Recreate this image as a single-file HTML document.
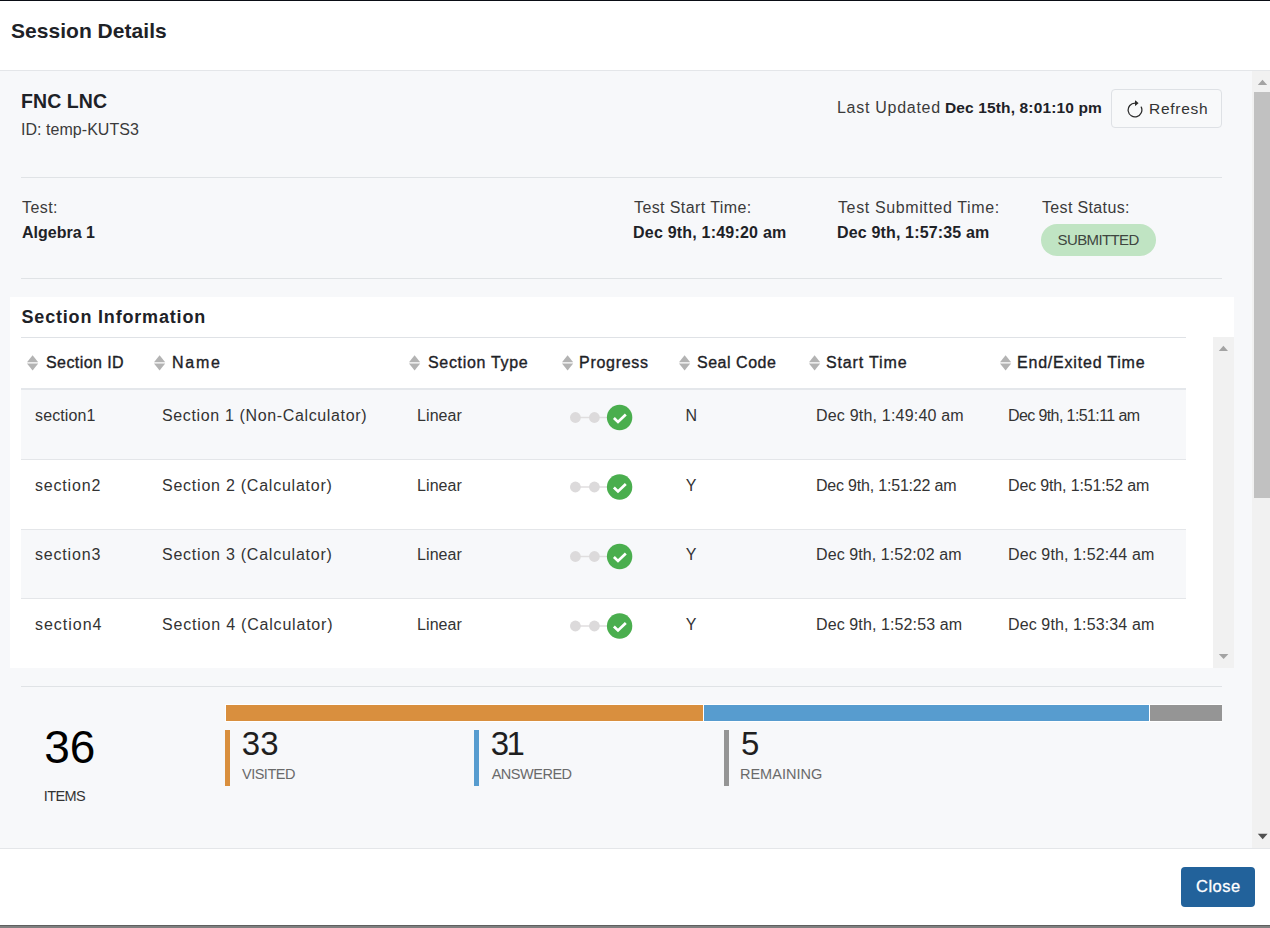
<!DOCTYPE html>
<html><head><meta charset="utf-8"><style>
html,body{margin:0;padding:0}
body{width:1270px;height:928px;overflow:hidden;position:relative;background:#fff;font-family:"Liberation Sans",sans-serif}
.abs{position:absolute}
.t{position:absolute;white-space:nowrap;line-height:normal}
</style></head><body>
<div class="abs" style="left:0;top:0;width:1270px;height:1px;background:#0a0d15"></div>
<div class="abs" style="left:0;top:70px;width:1270px;height:1px;background:#e4e6e9"></div>
<div class="abs" style="left:0;top:71px;width:1253px;height:777px;background:#f7f8fa"></div>
<!-- outer scrollbar -->
<div class="abs" style="left:1252px;top:71px;width:18px;height:777px;background:#f1f1f1"></div>
<div class="abs" style="left:1254px;top:92px;width:16px;height:406px;background:#c1c1c1"></div>
<svg class="abs" style="left:1253px;top:71px" width="17" height="17"><path d="M4.8 14 L9.5 8.8 L14.2 14 Z" fill="#a3a3a3"/></svg>
<svg class="abs" style="left:1253px;top:831px" width="17" height="17"><path d="M4.8 2.8 L9.7 8.3 L14.6 2.8 Z" fill="#505050"/></svg>
<div class="abs" style="left:0;top:848px;width:1270px;height:1px;background:#e4e6e9"></div>
<div class="abs" style="left:0;top:925px;width:1270px;height:1px;background:#5f5f5f"></div>
<div class="abs" style="left:0;top:926px;width:1270px;height:2px;background:#808080"></div>
<!-- refresh button -->
<div class="abs" style="left:1111px;top:89px;width:109px;height:37px;border:1px solid #dee1e5;border-radius:4px;background:#f8f9fa"></div>
<svg class="abs" style="left:1124.6px;top:99.5px" width="20" height="20" viewBox="0 0 16 16"><path fill="#2b2b2b" fill-rule="evenodd" d="M8 3a5 5 0 1 0 4.546 2.914.5.5 0 0 1 .908-.417A6 6 0 1 1 8 2z"/><path fill="#2b2b2b" d="M8 4.466V.534a.25.25 0 0 1 .41-.192l2.36 1.966c.12.1.12.284 0 .384L8.41 4.658A.25.25 0 0 1 8 4.466"/></svg>
<div class="abs" style="left:21px;top:177px;width:1201px;height:1px;background:#e0e3e6"></div>
<!-- badge -->
<div class="abs" style="left:1041px;top:224px;width:115px;height:32px;border-radius:16px;background:#c0e4c3"></div>
<div class="abs" style="left:21px;top:278px;width:1201px;height:1px;background:#e0e3e6"></div>
<!-- section panel -->
<div class="abs" style="left:10px;top:297px;width:1224px;height:371px;background:#fff"></div>
<div class="abs" style="left:21px;top:337px;width:1165px;height:1px;background:#dfe2e6"></div>
<div class="abs" style="left:21px;top:388px;width:1165px;height:2px;background:#e4e7eb"></div>
<div class="abs" style="left:21px;top:390px;width:1165px;height:69px;background:#f7f8fa"></div>
<div class="abs" style="left:21px;top:459px;width:1165px;height:1px;background:#e4e6e9"></div>
<div class="abs" style="left:21px;top:529px;width:1165px;height:1px;background:#e4e6e9"></div>
<div class="abs" style="left:21px;top:530px;width:1165px;height:68px;background:#f7f8fa"></div>
<div class="abs" style="left:21px;top:598px;width:1165px;height:1px;background:#e4e6e9"></div>
<!-- inner scrollbar -->
<div class="abs" style="left:1213px;top:337px;width:21px;height:331px;background:#f1f1f1"></div>
<svg class="abs" style="left:1213px;top:340px" width="21" height="14"><path d="M5.8 11 L10.4 5.8 L15 11 Z" fill="#a3a3a3"/></svg>
<svg class="abs" style="left:1213px;top:650px" width="21" height="14"><path d="M5.8 4 L10.6 8.9 L15.4 4 Z" fill="#a3a3a3"/></svg>
<div class="abs" style="left:27.3px;top:355px;width:12px;height:16px"><svg width="12" height="16" viewBox="0 0 12 16"><path d="M5.6 0.3 L11.2 7.3 L0 7.3 Z" fill="#b3b3b3"/><path d="M5.6 15.6 L11.2 8.6 L0 8.6 Z" fill="#b3b3b3"/></svg></div>
<div class="abs" style="left:154.2px;top:355px;width:12px;height:16px"><svg width="12" height="16" viewBox="0 0 12 16"><path d="M5.6 0.3 L11.2 7.3 L0 7.3 Z" fill="#b3b3b3"/><path d="M5.6 15.6 L11.2 8.6 L0 8.6 Z" fill="#b3b3b3"/></svg></div>
<div class="abs" style="left:409.4px;top:355px;width:12px;height:16px"><svg width="12" height="16" viewBox="0 0 12 16"><path d="M5.6 0.3 L11.2 7.3 L0 7.3 Z" fill="#b3b3b3"/><path d="M5.6 15.6 L11.2 8.6 L0 8.6 Z" fill="#b3b3b3"/></svg></div>
<div class="abs" style="left:562.2px;top:355px;width:12px;height:16px"><svg width="12" height="16" viewBox="0 0 12 16"><path d="M5.6 0.3 L11.2 7.3 L0 7.3 Z" fill="#b3b3b3"/><path d="M5.6 15.6 L11.2 8.6 L0 8.6 Z" fill="#b3b3b3"/></svg></div>
<div class="abs" style="left:678.7px;top:355px;width:12px;height:16px"><svg width="12" height="16" viewBox="0 0 12 16"><path d="M5.6 0.3 L11.2 7.3 L0 7.3 Z" fill="#b3b3b3"/><path d="M5.6 15.6 L11.2 8.6 L0 8.6 Z" fill="#b3b3b3"/></svg></div>
<div class="abs" style="left:808.7px;top:355px;width:12px;height:16px"><svg width="12" height="16" viewBox="0 0 12 16"><path d="M5.6 0.3 L11.2 7.3 L0 7.3 Z" fill="#b3b3b3"/><path d="M5.6 15.6 L11.2 8.6 L0 8.6 Z" fill="#b3b3b3"/></svg></div>
<div class="abs" style="left:1000.3px;top:355px;width:12px;height:16px"><svg width="12" height="16" viewBox="0 0 12 16"><path d="M5.6 0.3 L11.2 7.3 L0 7.3 Z" fill="#b3b3b3"/><path d="M5.6 15.6 L11.2 8.6 L0 8.6 Z" fill="#b3b3b3"/></svg></div>
<div class="abs" style="left:570px;top:403px;width:64px;height:28px"><svg width="64" height="28" viewBox="0 0 64 28"><line x1="5.5" y1="14.50" x2="45" y2="14.50" stroke="#e0dedf" stroke-width="1.5"/><circle cx="5.4" cy="14.50" r="5.4" fill="#dcdadb"/><circle cx="24.4" cy="14.50" r="5.4" fill="#dcdadb"/><circle cx="49.6" cy="14.50" r="12.7" fill="#4aae4e"/><path d="M43.9 15.10 L48 19.00 L55.8 11.50" fill="none" stroke="#fff" stroke-width="2.7" stroke-linecap="butt" stroke-linejoin="miter" stroke-miterlimit="3"/></svg></div>
<div class="abs" style="left:570px;top:473px;width:64px;height:28px"><svg width="64" height="28" viewBox="0 0 64 28"><line x1="5.5" y1="14.00" x2="45" y2="14.00" stroke="#e0dedf" stroke-width="1.5"/><circle cx="5.4" cy="14.00" r="5.4" fill="#dcdadb"/><circle cx="24.4" cy="14.00" r="5.4" fill="#dcdadb"/><circle cx="49.6" cy="14.00" r="12.7" fill="#4aae4e"/><path d="M43.9 14.60 L48 18.50 L55.8 11.00" fill="none" stroke="#fff" stroke-width="2.7" stroke-linecap="butt" stroke-linejoin="miter" stroke-miterlimit="3"/></svg></div>
<div class="abs" style="left:570px;top:542px;width:64px;height:28px"><svg width="64" height="28" viewBox="0 0 64 28"><line x1="5.5" y1="14.50" x2="45" y2="14.50" stroke="#e0dedf" stroke-width="1.5"/><circle cx="5.4" cy="14.50" r="5.4" fill="#dcdadb"/><circle cx="24.4" cy="14.50" r="5.4" fill="#dcdadb"/><circle cx="49.6" cy="14.50" r="12.7" fill="#4aae4e"/><path d="M43.9 15.10 L48 19.00 L55.8 11.50" fill="none" stroke="#fff" stroke-width="2.7" stroke-linecap="butt" stroke-linejoin="miter" stroke-miterlimit="3"/></svg></div>
<div class="abs" style="left:570px;top:612px;width:64px;height:28px"><svg width="64" height="28" viewBox="0 0 64 28"><line x1="5.5" y1="14.00" x2="45" y2="14.00" stroke="#e0dedf" stroke-width="1.5"/><circle cx="5.4" cy="14.00" r="5.4" fill="#dcdadb"/><circle cx="24.4" cy="14.00" r="5.4" fill="#dcdadb"/><circle cx="49.6" cy="14.00" r="12.7" fill="#4aae4e"/><path d="M43.9 14.60 L48 18.50 L55.8 11.00" fill="none" stroke="#fff" stroke-width="2.7" stroke-linecap="butt" stroke-linejoin="miter" stroke-miterlimit="3"/></svg></div>
<div class="abs" style="left:21px;top:686px;width:1201px;height:1px;background:#e0e3e6"></div>
<!-- stats bar -->
<div class="abs" style="left:225px;top:704px;width:997px;height:18px;background:#fff"></div>
<div class="abs" style="left:226px;top:705px;width:477px;height:16px;background:#d98f3e"></div>
<div class="abs" style="left:704px;top:705px;width:445px;height:16px;background:#579ccf"></div>
<div class="abs" style="left:1150px;top:705px;width:72px;height:16px;background:#959595"></div>
<div class="abs" style="left:225px;top:730px;width:5px;height:56px;background:#d98f3e"></div>
<div class="abs" style="left:474px;top:730px;width:5px;height:56px;background:#579ccf"></div>
<div class="abs" style="left:724px;top:730px;width:5px;height:56px;background:#959595"></div>
<!-- close button -->
<div class="abs" style="left:1181px;top:867px;width:74px;height:40px;border-radius:4px;background:#22629b"></div>
<div id="t0" class="t" style="left:11.00px;top:19.00px;font-size:21px;font-weight:700;color:#1e2227;letter-spacing:0.032px;">Session Details</div>
<div id="t1" class="t" style="left:21.00px;top:90.00px;font-size:19.5px;font-weight:700;color:#1e2227;letter-spacing:0.085px;">FNC LNC</div>
<div id="t2" class="t" style="left:21.00px;top:121.00px;font-size:16px;font-weight:400;color:#3b3b3b;letter-spacing:0.041px;">ID: temp-KUTS3</div>
<div id="t3" class="t" style="left:837.00px;top:99.00px;font-size:16px;font-weight:400;color:#3b3b3b;letter-spacing:0.720px;">Last Updated</div>
<div id="t4" class="t" style="left:945.00px;top:99.00px;font-size:15.5px;font-weight:700;color:#1e2227;letter-spacing:0.136px;">Dec 15th, 8:01:10 pm</div>
<div id="t5" class="t" style="left:1149.00px;top:100.00px;font-size:15.5px;font-weight:400;color:#333;letter-spacing:0.725px;">Refresh</div>
<div id="t6" class="t" style="left:22.00px;top:199.00px;font-size:16px;font-weight:400;color:#3b3b3b;letter-spacing:0.414px;">Test:</div>
<div id="t7" class="t" style="left:22.00px;top:224.00px;font-size:16px;font-weight:700;color:#1e2227;letter-spacing:-0.002px;">Algebra 1</div>
<div id="t8" class="t" style="left:634.00px;top:199.00px;font-size:16px;font-weight:400;color:#3b3b3b;letter-spacing:0.401px;">Test Start Time:</div>
<div id="t9" class="t" style="left:633.00px;top:224.00px;font-size:16px;font-weight:700;color:#1e2227;letter-spacing:0.212px;">Dec 9th, 1:49:20 am</div>
<div id="t10" class="t" style="left:838.00px;top:199.00px;font-size:16px;font-weight:400;color:#3b3b3b;letter-spacing:0.619px;">Test Submitted Time:</div>
<div id="t11" class="t" style="left:837.00px;top:224.00px;font-size:16px;font-weight:700;color:#1e2227;letter-spacing:0.157px;">Dec 9th, 1:57:35 am</div>
<div id="t12" class="t" style="left:1042.00px;top:199.00px;font-size:16px;font-weight:400;color:#3b3b3b;letter-spacing:0.350px;">Test Status:</div>
<div id="t13" class="t" style="left:1057.60px;top:231.00px;font-size:15px;font-weight:400;color:#3e4640;letter-spacing:-0.629px;">SUBMITTED</div>
<div id="t14" class="t" style="left:21.50px;top:307.00px;font-size:18px;font-weight:700;color:#1e2227;letter-spacing:0.816px;">Section Information</div>
<div id="t15" class="t" style="left:46.00px;top:354.00px;font-size:16px;font-weight:400;color:#1e2227;letter-spacing:0.416px;-webkit-text-stroke:0.35px #1e2227">Section ID</div>
<div id="t16" class="t" style="left:172.00px;top:354.00px;font-size:16px;font-weight:400;color:#1e2227;letter-spacing:1.740px;-webkit-text-stroke:0.35px #1e2227">Name</div>
<div id="t17" class="t" style="left:428.00px;top:354.00px;font-size:16px;font-weight:400;color:#1e2227;letter-spacing:0.673px;-webkit-text-stroke:0.35px #1e2227">Section Type</div>
<div id="t18" class="t" style="left:579.00px;top:354.00px;font-size:16px;font-weight:400;color:#1e2227;letter-spacing:0.711px;-webkit-text-stroke:0.35px #1e2227">Progress</div>
<div id="t19" class="t" style="left:697.00px;top:354.00px;font-size:16px;font-weight:400;color:#1e2227;letter-spacing:0.522px;-webkit-text-stroke:0.35px #1e2227">Seal Code</div>
<div id="t20" class="t" style="left:826.00px;top:354.00px;font-size:16px;font-weight:400;color:#1e2227;letter-spacing:0.856px;-webkit-text-stroke:0.35px #1e2227">Start Time</div>
<div id="t21" class="t" style="left:1017.00px;top:354.00px;font-size:16px;font-weight:400;color:#1e2227;letter-spacing:0.794px;-webkit-text-stroke:0.35px #1e2227">End/Exited Time</div>
<div id="t22" class="t" style="left:35.00px;top:407.00px;font-size:16px;font-weight:400;color:#333;letter-spacing:0.129px;">section1</div>
<div id="t23" class="t" style="left:162.00px;top:407.00px;font-size:16px;font-weight:400;color:#333;letter-spacing:0.640px;">Section 1 (Non-Calculator)</div>
<div id="t24" class="t" style="left:417.00px;top:407.00px;font-size:16px;font-weight:400;color:#333;letter-spacing:0.090px;">Linear</div>
<div id="t25" class="t" style="left:685.50px;top:407.00px;font-size:16px;font-weight:400;color:#333;letter-spacing:0.000px;">N</div>
<div id="t26" class="t" style="left:816.00px;top:407.00px;font-size:16px;font-weight:400;color:#333;letter-spacing:0.197px;">Dec 9th, 1:49:40 am</div>
<div id="t27" class="t" style="left:1008.00px;top:407.00px;font-size:16px;font-weight:400;color:#333;letter-spacing:-0.604px;">Dec 9th, 1:51:11 am</div>
<div id="t28" class="t" style="left:35.00px;top:477.00px;font-size:16px;font-weight:400;color:#333;letter-spacing:0.815px;">section2</div>
<div id="t29" class="t" style="left:162.00px;top:477.00px;font-size:16px;font-weight:400;color:#333;letter-spacing:0.761px;">Section 2 (Calculator)</div>
<div id="t30" class="t" style="left:417.00px;top:477.00px;font-size:16px;font-weight:400;color:#333;letter-spacing:0.090px;">Linear</div>
<div id="t31" class="t" style="left:685.70px;top:477.00px;font-size:16px;font-weight:400;color:#333;letter-spacing:0.000px;">Y</div>
<div id="t32" class="t" style="left:816.00px;top:477.00px;font-size:16px;font-weight:400;color:#333;letter-spacing:-0.198px;">Dec 9th, 1:51:22 am</div>
<div id="t33" class="t" style="left:1008.00px;top:477.00px;font-size:16px;font-weight:400;color:#333;letter-spacing:-0.148px;">Dec 9th, 1:51:52 am</div>
<div id="t34" class="t" style="left:35.00px;top:546.00px;font-size:16px;font-weight:400;color:#333;letter-spacing:0.815px;">section3</div>
<div id="t35" class="t" style="left:162.00px;top:546.00px;font-size:16px;font-weight:400;color:#333;letter-spacing:0.761px;">Section 3 (Calculator)</div>
<div id="t36" class="t" style="left:417.00px;top:546.00px;font-size:16px;font-weight:400;color:#333;letter-spacing:0.090px;">Linear</div>
<div id="t37" class="t" style="left:685.70px;top:546.00px;font-size:16px;font-weight:400;color:#333;letter-spacing:0.000px;">Y</div>
<div id="t38" class="t" style="left:816.00px;top:546.00px;font-size:16px;font-weight:400;color:#333;letter-spacing:0.086px;">Dec 9th, 1:52:02 am</div>
<div id="t39" class="t" style="left:1008.00px;top:546.00px;font-size:16px;font-weight:400;color:#333;letter-spacing:0.119px;">Dec 9th, 1:52:44 am</div>
<div id="t40" class="t" style="left:35.00px;top:616.00px;font-size:16px;font-weight:400;color:#333;letter-spacing:0.972px;">section4</div>
<div id="t41" class="t" style="left:162.00px;top:616.00px;font-size:16px;font-weight:400;color:#333;letter-spacing:0.794px;">Section 4 (Calculator)</div>
<div id="t42" class="t" style="left:417.00px;top:616.00px;font-size:16px;font-weight:400;color:#333;letter-spacing:0.090px;">Linear</div>
<div id="t43" class="t" style="left:685.70px;top:616.00px;font-size:16px;font-weight:400;color:#333;letter-spacing:0.000px;">Y</div>
<div id="t44" class="t" style="left:816.00px;top:616.00px;font-size:16px;font-weight:400;color:#333;letter-spacing:0.108px;">Dec 9th, 1:52:53 am</div>
<div id="t45" class="t" style="left:1008.00px;top:616.00px;font-size:16px;font-weight:400;color:#333;letter-spacing:0.119px;">Dec 9th, 1:53:34 am</div>
<div id="t46" class="t" style="left:44.30px;top:720.00px;font-size:46px;font-weight:400;color:#000;letter-spacing:-0.083px;">36</div>
<div id="t47" class="t" style="left:43.80px;top:788.00px;font-size:14.5px;font-weight:400;color:#333;letter-spacing:-0.584px;">ITEMS</div>
<div id="t48" class="t" style="left:241.70px;top:725.00px;font-size:33px;font-weight:400;color:#1f1f1f;letter-spacing:0.247px;">33</div>
<div id="t49" class="t" style="left:242.00px;top:766.00px;font-size:14.5px;font-weight:400;color:#6a6a6a;letter-spacing:-0.505px;">VISITED</div>
<div id="t50" class="t" style="left:490.70px;top:725.00px;font-size:33px;font-weight:400;color:#1f1f1f;letter-spacing:-2.500px;">31</div>
<div id="t51" class="t" style="left:491.70px;top:766.00px;font-size:14.5px;font-weight:400;color:#6a6a6a;letter-spacing:-0.488px;">ANSWERED</div>
<div id="t52" class="t" style="left:741.00px;top:725.00px;font-size:33px;font-weight:400;color:#1f1f1f;letter-spacing:0.000px;">5</div>
<div id="t53" class="t" style="left:739.90px;top:766.00px;font-size:14.5px;font-weight:400;color:#6a6a6a;letter-spacing:0.026px;">REMAINING</div>
<div id="t54" class="t" style="left:1196.00px;top:877.00px;font-size:16.5px;font-weight:400;color:#fff;letter-spacing:0.498px;-webkit-text-stroke:0.3px #fff">Close</div>
</body></html>
